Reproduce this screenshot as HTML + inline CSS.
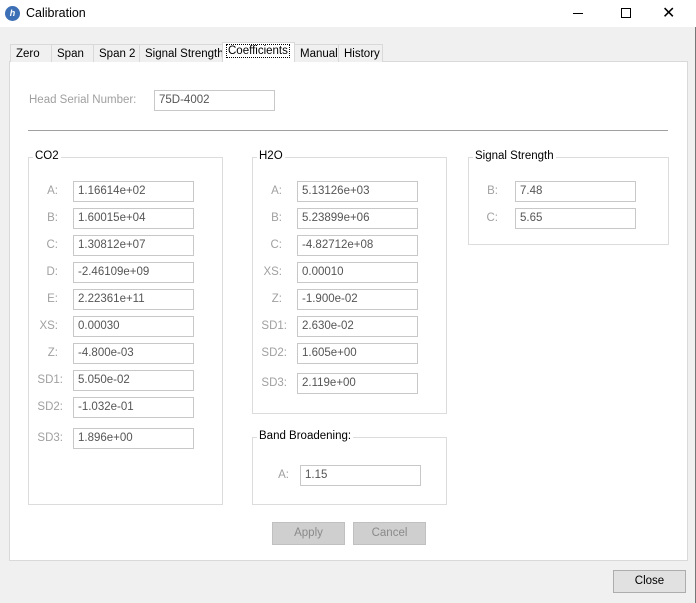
<!DOCTYPE html>
<html><head><style>
*{margin:0;padding:0;box-sizing:border-box}
body{width:696px;height:603px;background:#f0f0f0;font-family:"Liberation Sans",sans-serif;font-size:11.5px;color:#000;position:relative;overflow:hidden}
.a{position:absolute}
.tb{left:0;top:0;width:696px;height:27px;background:#fff}
.tab{position:absolute;top:44px;height:18px;border:1px solid #d9d9d9;border-bottom:none;background:#f0f0f0;padding:3px 0 0 5px;white-space:nowrap}
.panel{left:9px;top:61px;width:679px;height:500px;background:#fff;border:1px solid #d9d9d9}
.g{position:absolute;border:1px solid #dcdcdc}
.gl{position:absolute;background:#fff;padding:0 2px;top:-8px;left:4px}
.in{position:absolute;height:21px;border:1px solid #c8c8c8;background:#fff;color:#555;padding:3px 0 0 4px;font-size:11.5px;white-space:nowrap}
.lb{position:absolute;color:#a0a0a0;text-align:right}
.btn{position:absolute;height:23px;border:1px solid #c0c0c0;background:#cfcfcf;color:#8a8a8a;text-align:center;padding-top:4px}
</style></head><body>
<div class="a tb"></div>
<div class="a" style="left:5px;top:6px;width:15px;height:15px;border-radius:50%;background:#3d6fb6;color:#fff;font-size:9px;font-style:italic;font-weight:bold;text-align:center;line-height:15px">h</div>
<div class="a" style="left:26px;top:6px;font-size:12.5px">Calibration</div>
<div class="a" style="left:573px;top:13px;width:10px;height:1px;background:#000"></div>
<div class="a" style="left:621px;top:8px;width:10px;height:10px;border:1px solid #000"></div>
<div class="a" style="left:662px;top:3px;font-size:16px">✕</div>
<div class="a" style="left:695px;top:27px;width:1px;height:576px;background:#777"></div>
<div class="a panel"></div>
<div class="tab" style="left:10px;width:42px">Zero</div>
<div class="tab" style="left:51px;width:43px">Span</div>
<div class="tab" style="left:93px;width:47px">Span 2</div>
<div class="tab" style="left:139px;width:84px">Signal Strength</div>
<div class="tab" style="left:222px;top:42px;height:20px;width:73px;background:#fff;padding:2px 0 0 4px"><span style="outline:1px dotted #000;padding:0 1px">Coefficients</span></div>
<div class="tab" style="left:294px;width:45px">Manual</div>
<div class="tab" style="left:338px;width:45px">History</div>

<div class="lb" style="left:29px;top:94px;color:#a0a0a0">Head Serial Number:</div>
<div class="in" style="left:154px;top:90px;width:121px">75D-4002</div>
<div class="a" style="left:28px;top:130px;width:640px;height:1px;background:#a0a0a0"></div>

<div class="g" style="left:28px;top:157px;width:195px;height:348px"><span class="gl">CO2</span></div>
<div class="g" style="left:252px;top:157px;width:195px;height:257px"><span class="gl">H2O</span></div>
<div class="g" style="left:252px;top:437px;width:195px;height:68px"><span class="gl">Band Broadening:</span></div>
<div class="g" style="left:468px;top:157px;width:201px;height:88px"><span class="gl">Signal Strength</span></div>

<div class="lb" style="left:20px;width:38px;top:185px">A:</div><div class="in" style="left:73px;top:181px;width:121px">1.16614e+02</div>
<div class="lb" style="left:20px;width:38px;top:212px">B:</div><div class="in" style="left:73px;top:208px;width:121px">1.60015e+04</div>
<div class="lb" style="left:20px;width:38px;top:239px">C:</div><div class="in" style="left:73px;top:235px;width:121px">1.30812e+07</div>
<div class="lb" style="left:20px;width:38px;top:266px">D:</div><div class="in" style="left:73px;top:262px;width:121px">-2.46109e+09</div>
<div class="lb" style="left:20px;width:38px;top:293px">E:</div><div class="in" style="left:73px;top:289px;width:121px">2.22361e+11</div>
<div class="lb" style="left:20px;width:38px;top:320px">XS:</div><div class="in" style="left:73px;top:316px;width:121px">0.00030</div>
<div class="lb" style="left:20px;width:38px;top:347px">Z:</div><div class="in" style="left:73px;top:343px;width:121px">-4.800e-03</div>
<div class="lb" style="left:20px;width:43px;top:374px">SD1:</div><div class="in" style="left:73px;top:370px;width:121px">5.050e-02</div>
<div class="lb" style="left:20px;width:43px;top:401px">SD2:</div><div class="in" style="left:73px;top:397px;width:121px">-1.032e-01</div>
<div class="lb" style="left:20px;width:43px;top:432px">SD3:</div><div class="in" style="left:73px;top:428px;width:121px">1.896e+00</div>

<div class="lb" style="left:244px;width:38px;top:185px">A:</div><div class="in" style="left:297px;top:181px;width:121px">5.13126e+03</div>
<div class="lb" style="left:244px;width:38px;top:212px">B:</div><div class="in" style="left:297px;top:208px;width:121px">5.23899e+06</div>
<div class="lb" style="left:244px;width:38px;top:239px">C:</div><div class="in" style="left:297px;top:235px;width:121px">-4.82712e+08</div>
<div class="lb" style="left:244px;width:38px;top:266px">XS:</div><div class="in" style="left:297px;top:262px;width:121px">0.00010</div>
<div class="lb" style="left:244px;width:38px;top:293px">Z:</div><div class="in" style="left:297px;top:289px;width:121px">-1.900e-02</div>
<div class="lb" style="left:244px;width:43px;top:320px">SD1:</div><div class="in" style="left:297px;top:316px;width:121px">2.630e-02</div>
<div class="lb" style="left:244px;width:43px;top:347px">SD2:</div><div class="in" style="left:297px;top:343px;width:121px">1.605e+00</div>
<div class="lb" style="left:244px;width:43px;top:377px">SD3:</div><div class="in" style="left:297px;top:373px;width:121px">2.119e+00</div>

<div class="lb" style="left:260px;width:29px;top:469px">A:</div><div class="in" style="left:300px;top:465px;width:121px">1.15</div>

<div class="lb" style="left:460px;width:38px;top:185px">B:</div><div class="in" style="left:515px;top:181px;width:121px">7.48</div>
<div class="lb" style="left:460px;width:38px;top:212px">C:</div><div class="in" style="left:515px;top:208px;width:121px">5.65</div>

<div class="btn" style="left:272px;top:522px;width:73px">Apply</div>
<div class="btn" style="left:353px;top:522px;width:73px">Cancel</div>
<div class="btn" style="left:613px;top:570px;width:73px;background:#e1e1e1;border-color:#adadad;color:#000">Close</div>
</body></html>
